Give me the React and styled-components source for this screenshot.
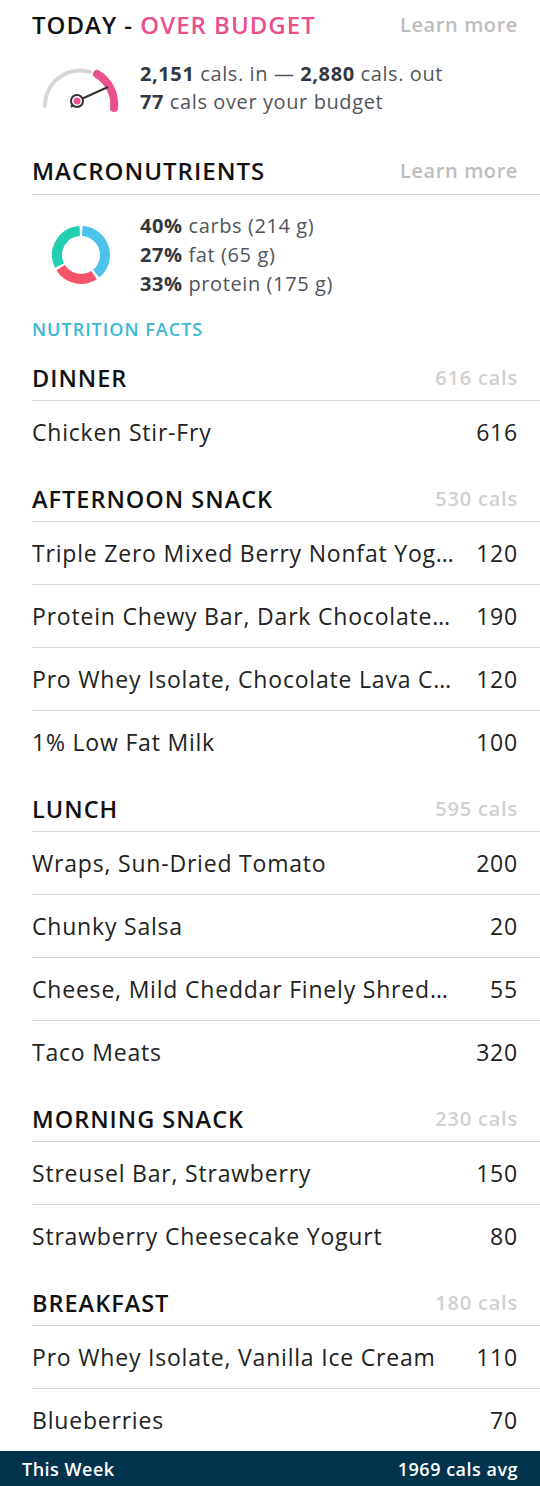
import styled, { createGlobalStyle } from "styled-components";

const GlobalStyle = createGlobalStyle`
  html, body {
    margin: 0;
    padding: 0;
    background: #fff;
  }
  body {
    font-family: "Open Sans", Lato, sans-serif;
    color: #222;
  }
`;

const Page = styled.div`
  width: 540px;
  background: #fff;
`;

const Content = styled.div`
  padding-left: 32px;
`;

const TitleRow = styled.div`
  display: flex;
  justify-content: space-between;
  align-items: center;
  padding: ${(p) => (p.$top ? "10px" : "40px")} 22px 8px 0;
  line-height: 30px;
  border-bottom: ${(p) => (p.$divider ? "1px solid #d6d6d6" : "none")};
`;

const Title = styled.div`
  font-size: 24px;
  font-weight: 600;
  letter-spacing: 1px;
  color: #111;
`;

const Pink = styled.span`
  color: #ea4f8e;
`;

const LearnMore = styled.a`
  font-size: 20px;
  font-weight: 600;
  letter-spacing: 0.6px;
  color: #bdbdbd;
  text-decoration: none;
`;

const Summary = styled.div`
  display: flex;
  align-items: center;
  gap: ${(p) => p.$gap}px;
  padding-left: ${(p) => p.$pl}px;
  margin-top: ${(p) => p.$mt || 0}px;
`;

const Lines = styled.div`
  font-size: 20px;
  letter-spacing: 0.6px;
  line-height: ${(p) => p.$lh || 28}px;
  color: #50555b;
`;

const Strong = styled.b`
  font-weight: 700;
  color: #333840;
`;

const FactsLink = styled.div`
  margin-top: 20px;
  margin-bottom: 2px;
  font-size: 18px;
  font-weight: 600;
  letter-spacing: 1px;
  line-height: 22px;
  color: #3cb8d6;
`;

const SectionHeader = styled.div`
  display: flex;
  justify-content: space-between;
  align-items: center;
  padding: 22px 22px 8px 0;
  line-height: 28px;
  border-bottom: 1px solid #d6d6d6;
`;

const SectionName = styled.div`
  font-size: 23.5px;
  font-weight: 600;
  letter-spacing: 1px;
  color: #111;
`;

const SectionCals = styled.div`
  font-size: 20px;
  font-weight: 600;
  letter-spacing: 0.8px;
  color: #d0d0d0;
`;

const Row = styled.div`
  display: flex;
  align-items: center;
  height: 62px;
  padding-right: 22px;
  border-top: ${(p) => (p.$first ? "none" : "1px solid #d6d6d6")};
  font-size: 23px;
  letter-spacing: 0.8px;
  color: #222;
`;

const FoodName = styled.div`
  flex: 0 1 424px;
  min-width: 0;
  white-space: nowrap;
  overflow: hidden;
  text-overflow: ellipsis;
`;

const FoodCals = styled.div`
  flex-shrink: 0;
  margin-left: auto;
`;

const Footer = styled.div`
  display: flex;
  justify-content: space-between;
  align-items: center;
  height: 35px;
  padding: 0 22px;
  background: #03344e;
  color: #fff;
  font-size: 18px;
  font-weight: 600;
  letter-spacing: 0.5px;
`;

const meals = [
  { name: "DINNER", cals: 616, items: [["Chicken Stir-Fry", 616]] },
  {
    name: "AFTERNOON SNACK",
    cals: 530,
    items: [
      ["Triple Zero Mixed Berry Nonfat Yogurt", 120],
      ["Protein Chewy Bar, Dark Chocolate Almond", 190],
      ["Pro Whey Isolate, Chocolate Lava Cake", 120],
      ["1% Low Fat Milk", 100],
    ],
  },
  {
    name: "LUNCH",
    cals: 595,
    items: [
      ["Wraps, Sun-Dried Tomato", 200],
      ["Chunky Salsa", 20],
      ["Cheese, Mild Cheddar Finely Shredded", 55],
      ["Taco Meats", 320],
    ],
  },
  {
    name: "MORNING SNACK",
    cals: 230,
    items: [
      ["Streusel Bar, Strawberry", 150],
      ["Strawberry Cheesecake Yogurt", 80],
    ],
  },
  {
    name: "BREAKFAST",
    cals: 180,
    items: [
      ["Pro Whey Isolate, Vanilla Ice Cream", 110],
      ["Blueberries", 70],
    ],
  },
];

function Gauge() {
  return (
    <svg width="80" height="56" viewBox="0 0 80 56">
      <path
        d="M5 46 A35 35 0 0 1 50 12"
        fill="none"
        stroke="#d7d7d7"
        strokeWidth="4"
        strokeLinecap="round"
      />
      <path
        d="M57 14 A35 35 0 0 1 74 48"
        fill="none"
        stroke="#ea4f8e"
        strokeWidth="8"
        strokeLinecap="round"
      />
      <line x1="37" y1="41" x2="68" y2="27" stroke="#333" strokeWidth="2" />
      <line x1="31" y1="47" x2="34" y2="44" stroke="#333" strokeWidth="2" />
      <circle cx="37" cy="41" r="6" fill="#fff" stroke="#333" strokeWidth="2" />
      <circle cx="37" cy="41" r="3.5" fill="#ea4f8e" />
    </svg>
  );
}

function arc(cx, cy, r, a0, a1) {
  const p = (a) => [
    cx + r * Math.sin((a * Math.PI) / 180),
    cy - r * Math.cos((a * Math.PI) / 180),
  ];
  const [x0, y0] = p(a0);
  const [x1, y1] = p(a1);
  const large = a1 - a0 > 180 ? 1 : 0;
  return `M${x0} ${y0} A${r} ${r} 0 ${large} 1 ${x1} ${y1}`;
}

function Donut() {
  const segs = [
    [0, 144, "#4cc2ec"],
    [144, 241, "#f3546a"],
    [241, 360, "#22cfb0"],
  ];
  return (
    <svg width="62" height="62" viewBox="0 0 62 62">
      {segs.map(([a, b, c]) => (
        <path
          key={c}
          d={arc(31, 31, 24, a + 3, b - 3)}
          fill="none"
          stroke={c}
          strokeWidth="10"
        />
      ))}
    </svg>
  );
}

export default function App() {
  return (
    <Page>
      <GlobalStyle />
      <Content>
        <TitleRow $top>
          <Title>
            TODAY - <Pink>OVER BUDGET</Pink>
          </Title>
          <LearnMore>Learn more</LearnMore>
        </TitleRow>
        <Summary $mt={12} $pl={8} $gap={20}>
          <Gauge />
          <Lines>
            <div>
              <Strong>2,151</Strong> cals. in — <Strong>2,880</Strong> cals. out
            </div>
            <div>
              <Strong>77</Strong> cals over your budget
            </div>
          </Lines>
        </Summary>

        <TitleRow $divider>
          <Title>MACRONUTRIENTS</Title>
          <LearnMore>Learn more</LearnMore>
        </TitleRow>
        <Summary $mt={16} $pl={18} $gap={28}>
          <Donut />
          <Lines $lh={29}>
            <div>
              <Strong>40%</Strong> carbs (214 g)
            </div>
            <div>
              <Strong>27%</Strong> fat (65 g)
            </div>
            <div>
              <Strong>33%</Strong> protein (175 g)
            </div>
          </Lines>
        </Summary>

        <FactsLink>NUTRITION FACTS</FactsLink>

        {meals.map((m) => (
          <section key={m.name}>
            <SectionHeader>
              <SectionName>{m.name}</SectionName>
              <SectionCals>{m.cals} cals</SectionCals>
            </SectionHeader>
            {m.items.map(([n, c], i) => (
              <Row key={n} $first={i === 0}>
                <FoodName>{n}</FoodName>
                <FoodCals>{c}</FoodCals>
              </Row>
            ))}
          </section>
        ))}
      </Content>
      <Footer>
        <span>This Week</span>
        <span>1969 cals avg</span>
      </Footer>
    </Page>
  );
}
